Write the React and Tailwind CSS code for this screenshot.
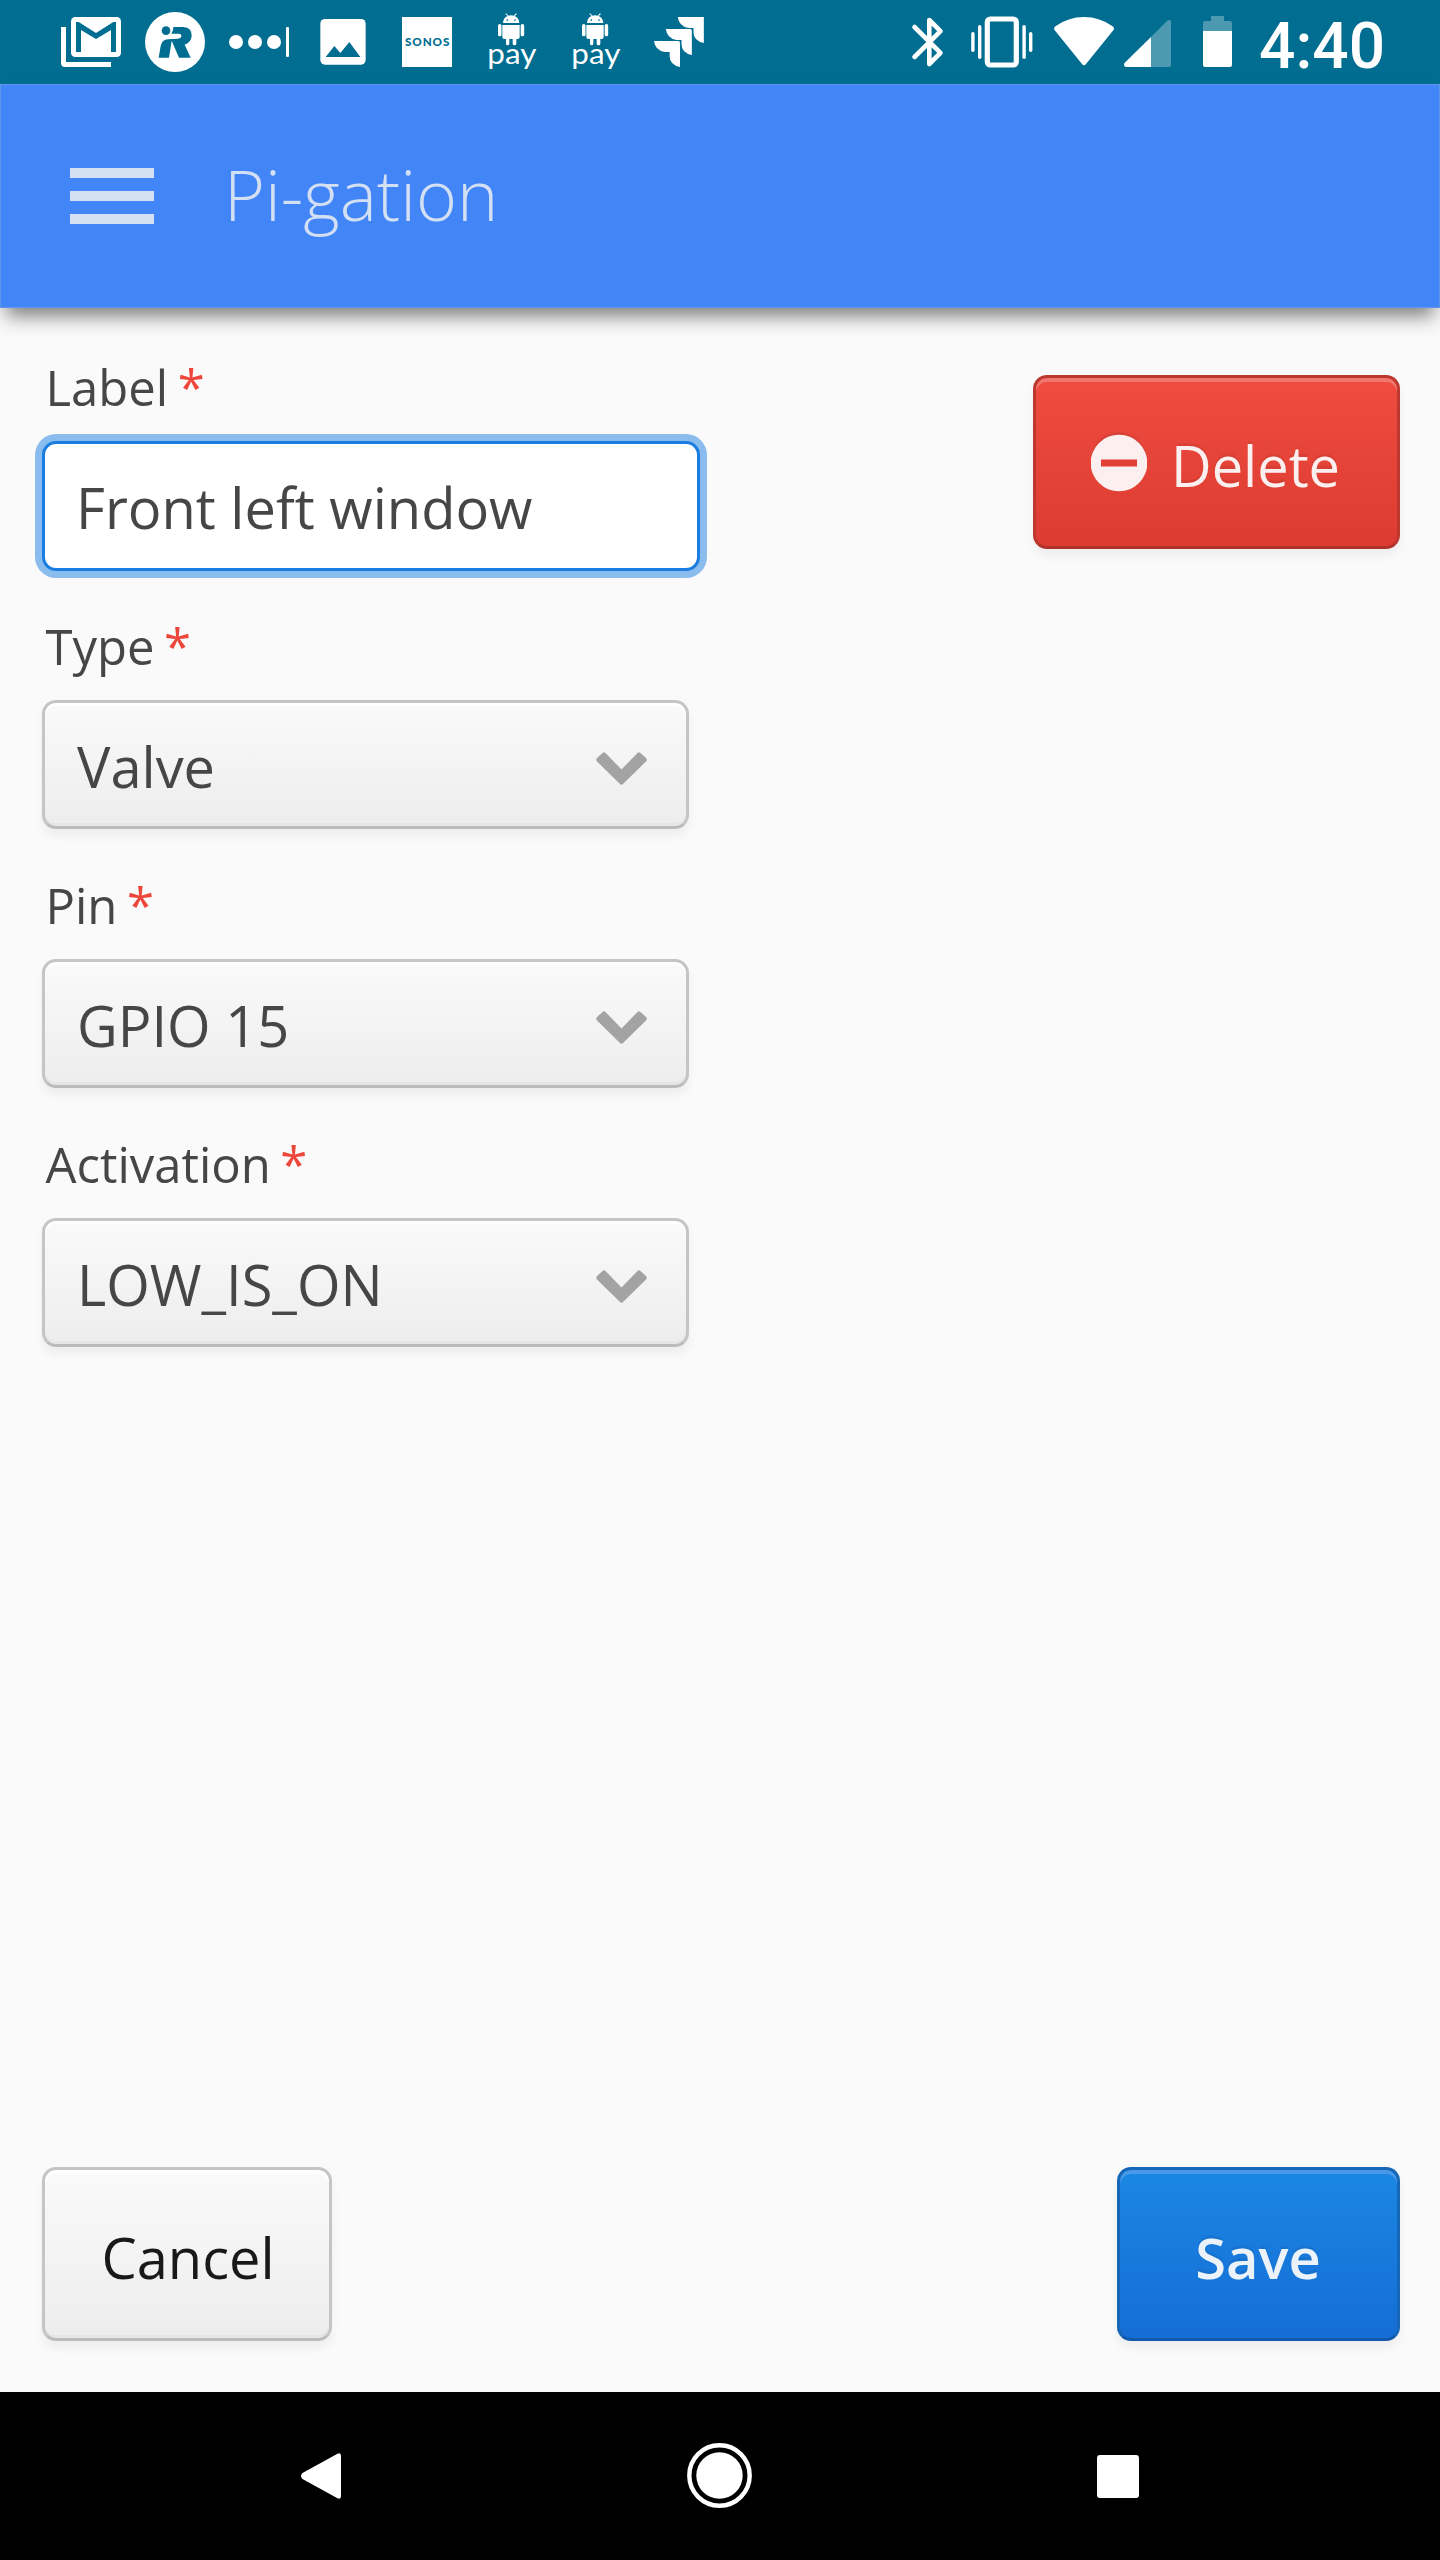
function StatusIcon({ x, children }) {
  return (
    <svg className="h-[84px] w-[84px] shrink-0" viewBox={`${x} 0 252 252`} fill="#fff">
      {children}
    </svg>
  );
}

function GmailIcon() {
  return (
    <StatusIcon x={27}>
      <path d="M63 81H78V186H213V201H75Q63 201 63 189Z" />
      <rect x="93" y="51" width="150" height="120" rx="13" />
      <path fill="#006d91" d="M108 156V66H116L168 99L220 66H228V156H213V90L168 117L123 90V156Z" />
    </StatusIcon>
  );
}

function RunnerIcon() {
  return (
    <StatusIcon x={279}>
      <circle cx="405" cy="126" r="90" />
      <g fill="#006d91">
        <circle cx="378" cy="92" r="13" />
        <path d="M400 81H430Q455 82 455 107Q454 127 434 134L452 173H417L395 122L387 173H356L362 138Q366 119 384 118L414 116Q424 114 424 108Q424 101 416 101H394Q401 92 400 81Z" />
      </g>
    </StatusIcon>
  );
}

function DotsIcon() {
  return (
    <StatusIcon x={531}>
      <circle cx="588" cy="126" r="21" />
      <circle cx="645" cy="126" r="21" />
      <circle cx="702" cy="126" r="21" />
      <rect x="738" y="81" width="9" height="90" rx="3" />
    </StatusIcon>
  );
}

function PhotoIcon() {
  return (
    <StatusIcon x={783}>
      <rect x="841" y="57" width="136" height="137" rx="14" />
      <path fill="#006d91" d="M857 171L883 138L901 159L928 126L961 171Z" />
    </StatusIcon>
  );
}

function SonosIcon() {
  return (
    <StatusIcon x={15}>
      <rect x="66" y="51" width="150" height="150" />
      <text x="75" y="138" fill="#006d91" fontFamily="Lato, sans-serif" fontWeight="900" fontSize="35" textLength="133" lengthAdjust="spacing">
        SONOS
      </text>
    </StatusIcon>
  );
}

function AndroidPayIcon() {
  return (
    <StatusIcon x={267}>
      <path d="M369 69Q370 53 383 48L376 42L378 40L386 47Q393 44 401 47L408 40L411 42L404 48Q417 54 418 69Z" />
      <circle cx="382" cy="60" r="2.6" fill="#006d91" />
      <circle cx="405" cy="60" r="2.6" fill="#006d91" />
      <path d="M367 75H419V112Q419 117 413 117H409V131Q409 136 403.500 136Q398 136 398 131V117H388V131Q388 136 383 136Q378 136 378 131V117H373Q367 117 367 112Z" />
      <rect x="354" y="72" width="10.500" height="37" rx="5" />
      <rect x="422" y="72" width="10.500" height="37" rx="5" />
      <text x="322" y="192" fontFamily="Lato, sans-serif" fontSize="88" textLength="147" lengthAdjust="spacingAndGlyphs">
        pay
      </text>
    </StatusIcon>
  );
}

function JiraIcon() {
  return (
    <StatusIcon x={771}>
      <path transform="translate(893.500 51)" d="M0 0H78V78Q47 72 47 46V33H32Q3 28 0 0Z" />
      <path transform="translate(857.500 87)" d="M0 0H73Q78 0 78 5V78Q47 72 47 46V33H32Q3 28 0 0Z" />
      <path transform="translate(822 123)" d="M0 0H73Q78 0 78 5V78Q47 72 47 46V33H32Q3 28 0 0Z" />
    </StatusIcon>
  );
}

function StatusBar() {
  return (
    <div className="flex h-[84px] shrink-0 items-center bg-[#006d91] pl-[49px]">
      <GmailIcon />
      <RunnerIcon />
      <DotsIcon />
      <PhotoIcon />
      <SonosIcon />
      <AndroidPayIcon />
      <AndroidPayIcon />
      <JiraIcon />
      <svg className="ml-[177px] h-[84px] w-[62px] shrink-0" viewBox="898 0 62 84" fill="none" stroke="#fff" strokeWidth="4.600" strokeLinecap="round" strokeLinejoin="round">
        <path d="M914.500 27L940.500 52.800L929.300 64V20L940.500 31.200L914.500 57" />
      </svg>
      <svg className="h-[84px] w-[84px] shrink-0" viewBox="960 0 84 84" fill="#fff">
        <rect x="987.300" y="19" width="29" height="46" rx="3" fill="none" stroke="#fff" strokeWidth="5.200" />
        <rect x="971.200" y="32" width="3.400" height="20" rx="1.700" />
        <rect x="978" y="25" width="3.400" height="34" rx="1.700" />
        <rect x="1022.400" y="25" width="3.400" height="34" rx="1.700" />
        <rect x="1029" y="32" width="3.400" height="20" rx="1.700" />
      </svg>
      <svg className="h-[84px] w-[75px] shrink-0" viewBox="1044 0 75 84" fill="#fff">
        <path d="M1055 26.500Q1068 17 1084 17T1113 26.500Q1114.800 28 1113.500 30L1086 64Q1084 66.500 1082 64L1054.500 30Q1053.300 28 1055 26.500Z" />
      </svg>
      <svg className="h-[84px] w-[68px] shrink-0" viewBox="1119 0 68 84" fill="#fff">
        <path fill="#4d99b2" d="M1151 37L1167.500 20.600Q1171 19 1171 22V65Q1171 67 1169 67H1151Z" />
        <path d="M1151 37V67H1126Q1123 66 1124.500 63Z" />
      </svg>
      <svg className="h-[84px] w-[61px] shrink-0" viewBox="1187 0 61 84" fill="#fff">
        <path fill="#4d99b2" d="M1211 16H1224V21H1230Q1232 21 1232 23V31H1203V23Q1203 21 1205 21H1211Z" />
        <path d="M1203 31H1232V65Q1232 67 1230 67H1205Q1203 67 1203 65Z" />
      </svg>
      <span className="mt-[9px] ml-[11px] font-[Roboto,sans-serif] text-[64px] leading-[84px] font-medium text-white">4:40</span>
    </div>
  );
}

function AppBar() {
  return (
    <header className="z-10 flex h-[224px] shrink-0 items-center border border-[#5f97ee] bg-[#4285f6] pl-[69px] shadow-[0_14px_18px_-6px_rgba(0,0,0,0.5)]">
      <div className="flex w-[84px] flex-col gap-[13px]">
        <div className="h-[10px] bg-[#d3dff3]" />
        <div className="h-[10px] bg-[#d3dff3]" />
        <div className="h-[10px] bg-[#d3dff3]" />
      </div>
      <h1 className="mt-[-5px] ml-[70px] text-[70px] leading-[96px] font-light text-[#d3dff3]">Pi-gation</h1>
    </header>
  );
}

function Field({ label, children }) {
  return (
    <div className="flex flex-col">
      <label className="mb-[29px] h-[50px] pl-[3.500px] text-[49px] leading-[50px] text-[#464646]">
        {label}
        <span className="ml-[9.500px] text-[#ed473b]">*</span>
      </label>
      {children}
    </div>
  );
}

function Select({ value }) {
  return (
    <div className="flex h-[129px] w-[647px] items-center justify-between rounded-[14px] border-[3px] border-[#c5c5c5] border-b-[#bbbbbb] bg-linear-to-b from-[#fafafa] to-[#ededed] pt-[3px] pr-[39px] pl-[32px] text-[56px] text-[#464646] shadow-[inset_0_3px_0_#ffffff,inset_0_-3px_0_#e6e6e6,0_7px_10px_rgba(0,0,0,0.05)]">
      <span className="leading-[100px]">{value}</span>
      <svg className="mt-[5px] h-[33px] w-[51px]" viewBox="0 0 51 33" fill="#a3a3a3">
        <path d="M6.500 1Q8 -0.300 9.500 1L25.500 17.500L41.500 1Q43 -0.300 44.500 1L50 6Q51.500 8 50 9.500L27 32Q25.500 33.300 24 32L1 9.500Q-0.500 8 1 6Z" />
      </svg>
    </div>
  );
}

export default function App() {
  return (
    <div className='flex h-[2560px] w-[1440px] flex-col overflow-hidden bg-[#fafafa] font-["Open_Sans","Noto_Sans",sans-serif]'>
      <StatusBar />
      <AppBar />
      <main className="flex flex-1 flex-col justify-between pr-[40px] pb-[51px] pl-[42px]">
        <div className="flex items-start justify-between">
          <form className="flex flex-col gap-[51px] pt-[54px]">
            <Field label="Label">
              <input
                readOnly
                value="Front left window"
                className="h-[130px] w-[658px] rounded-[14px] border-[3px] border-[#197de1] bg-white pt-px pl-[31px] text-[56px] text-[#464646] shadow-[0_0_0_7px_#8bbcee] outline-none"
              />
            </Field>
            <div className="-mt-px flex flex-col gap-[51px]">
              <Field label="Type">
                <Select value="Valve" />
              </Field>
              <Field label="Pin">
                <Select value="GPIO 15" />
              </Field>
              <Field label="Activation">
                <Select value="LOW_IS_ON" />
              </Field>
            </div>
          </form>
          <button className="mt-[67px] flex h-[174px] w-[367px] items-center rounded-[14px] border-[3px] border-[#bd382f] border-b-[#b1322a] bg-linear-to-b from-[#f04c40] to-[#dd3b31] pl-[55px] text-[56px] text-[#fbf0ef] shadow-[inset_0_4px_0_#f0776f,0_7px_10px_rgba(0,0,0,0.05)] [text-shadow:0_-3.5px_0_rgba(0,0,0,0.06)]">
            <svg className="h-[60px] w-[56px]" viewBox="0 0 56 60">
              <circle cx="28" cy="28" r="28" fill="#d74138" />
              <circle cx="28" cy="31" r="28.300" fill="#fbf0ef" />
              <rect x="10" y="27.500" width="36" height="7" fill="#e34136" />
            </svg>
            <span className="mt-[6px] ml-[24px]">Delete</span>
          </button>
        </div>
        <footer className="flex justify-between">
          <button className="h-[174px] w-[290px] rounded-[14px] border-[3px] border-[#c5c5c5] border-b-[#bbbbbb] bg-linear-to-b from-[#fafafa] to-[#ededed] pt-[5px] pl-[2px] text-[56px] text-[#191919] shadow-[inset_0_4px_0_#ffffff,inset_0_-3px_0_#e6e6e6,0_7px_10px_rgba(0,0,0,0.05)]">
            Cancel
          </button>
          <button className="h-[174px] w-[283px] rounded-[14px] border-[3px] border-[#1667b7] border-b-[#1259ad] bg-linear-to-b from-[#1b87e3] to-[#166dd5] pt-[5px] pr-px text-[56px] font-semibold text-[#ecf2fa] shadow-[inset_0_4px_0_#4a99e8,0_7px_10px_rgba(0,0,0,0.05)] [text-shadow:0_-3.5px_0_rgba(0,0,0,0.06)]">
            Save
          </button>
        </footer>
      </main>
      <nav className="flex h-[168px] shrink-0 items-center bg-black pl-[301px]">
        <svg className="h-[46px] w-[40px]" viewBox="0 0 40 46" fill="#fff">
          <path d="M1.500 20L36 1Q40 -1 40 3V43Q40 47 36 45L1.500 26Q-1.500 23 1.500 20Z" />
        </svg>
        <svg className="ml-[346px] h-[66px] w-[66px]" viewBox="0 0 66 66">
          <circle cx="32.500" cy="32.500" r="30.200" fill="none" stroke="#fff" strokeWidth="4.400" />
          <circle cx="32.500" cy="32.500" r="23.200" fill="#fff" />
        </svg>
        <div className="ml-[344px] h-[43px] w-[42px] rounded-[3px] bg-white" />
      </nav>
    </div>
  );
}
